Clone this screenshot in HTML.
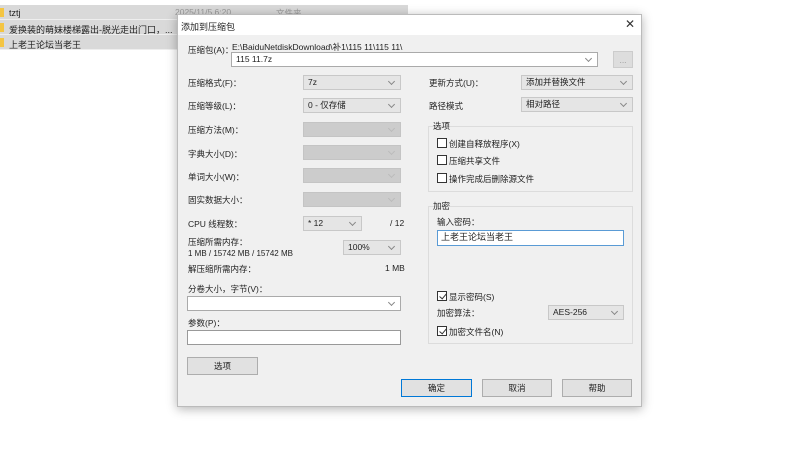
<!DOCTYPE html>
<html><head><meta charset="utf-8"><style>
*{box-sizing:border-box;margin:0;padding:0}
body{width:800px;height:451px;background:#fff;position:relative;overflow:hidden;font-family:"Liberation Sans","Noto Sans CJK SC",sans-serif;font-size:8.5px;color:#222}
.a{position:absolute;white-space:nowrap}
.row{position:absolute;left:0;width:408px;height:15px;background:#d9d9d9;border-bottom:1px solid #eee}
.fold{position:absolute;left:0;width:4px;height:9px;background:#f4c542}
#dlg{position:absolute;left:177px;top:14px;width:465px;height:393px;background:#f0f0f0;border:1px solid #bbb;box-shadow:0 2px 10px rgba(0,0,0,.3)}
#tb{position:absolute;left:0;top:0;width:100%;height:20px;background:#fff}
.sel{position:absolute;height:15px;background:#e5e5e5;border:1px solid #c8c8c8;padding-left:4px;line-height:13px}
.sel:after{content:"";position:absolute;right:6px;top:3px;width:4px;height:4px;border-right:1px solid #888;border-bottom:1px solid #888;transform:rotate(45deg)}
.dis{background:#cccccc;border-color:#c4c4c4}
.dis:after{border-color:#bbb}
.inp{position:absolute;height:15px;background:#fff;border:1px solid #7a7a7a;padding-left:3px;line-height:13px}
.btn{position:absolute;height:18px;background:#e1e1e1;border:1px solid #adadad;text-align:center;line-height:16px}
.grp{position:absolute;border:1px solid #dcdcdc}
.cb{position:absolute;width:10px;height:10px;border:1px solid #333;background:#fff}
.cb.on:after{content:"";position:absolute;left:3px;top:0px;width:3px;height:6px;border-right:1px solid #333;border-bottom:1px solid #333;transform:rotate(40deg)}
</style></head><body>
<div class="row" style="top:5px"></div><div class="fold" style="top:8px"></div>
<div class="row" style="top:20px"></div><div class="fold" style="top:23px"></div>
<div class="row" style="top:35px"></div><div class="fold" style="top:38px"></div>
<div class="a" style="left:9px;top:8px;font-size:9px">tztj</div>
<div class="a" style="left:175px;top:7px;color:#999">2025/11/5 6:20</div>
<div class="a" style="left:276px;top:7px;color:#999">文件夹</div>
<div class="a" style="left:9px;top:23px;font-size:9px">爱换装的萌妹楼梯露出-脱光走出门口，...</div>
<div class="a" style="left:9px;top:38px;font-size:9px">上老王论坛当老王</div>

<div id="dlg">
<div id="tb"></div>
<div class="a" style="left:3px;top:5px;font-size:9px">添加到压缩包</div>
<div class="a" style="left:447px;top:2px;font-size:12px;color:#333">✕</div>

<div class="a" style="left:10px;top:29px">压缩包(A)：</div>
<div class="a" style="left:54px;top:26px">E:\BaiduNetdiskDownload\补1\115 11\115 11\</div>
<div class="sel" style="left:53px;top:37px;width:367px;background:#fff;border-color:#aaa">115 11.7z</div>
<div class="btn" style="left:435px;top:36px;width:20px;height:17px;background:#ddd;border-color:#ccc;color:#999">...</div>

<div class="a" style="left:10px;top:62px">压缩格式(F)：</div><div class="sel" style="left:125px;top:60px;width:98px">7z</div>
<div class="a" style="left:10px;top:85px">压缩等级(L)：</div><div class="sel" style="left:125px;top:83px;width:98px">0 - 仅存储</div>
<div class="a" style="left:10px;top:109px">压缩方法(M)：</div><div class="sel dis" style="left:125px;top:107px;width:98px"></div>
<div class="a" style="left:10px;top:133px">字典大小(D)：</div><div class="sel dis" style="left:125px;top:130px;width:98px"></div>
<div class="a" style="left:10px;top:156px">单词大小(W)：</div><div class="sel dis" style="left:125px;top:153px;width:98px"></div>
<div class="a" style="left:10px;top:179px">固实数据大小：</div><div class="sel dis" style="left:125px;top:177px;width:98px"></div>
<div class="a" style="left:10px;top:203px">CPU 线程数：</div><div class="sel" style="left:125px;top:201px;width:59px">* 12</div>
<div class="a" style="left:212px;top:203px">/ 12</div>
<div class="a" style="left:10px;top:221px">压缩所需内存：</div>
<div class="a" style="left:10px;top:234px;font-size:8px">1 MB / 15742 MB / 15742 MB</div>
<div class="sel" style="left:165px;top:225px;width:58px">100%</div>
<div class="a" style="left:10px;top:248px">解压缩所需内存：</div>
<div class="a" style="left:207px;top:248px">1 MB</div>
<div class="a" style="left:10px;top:268px">分卷大小，字节(V)：</div>
<div class="sel" style="left:9px;top:281px;width:214px;background:#fff;border-color:#aaa"></div>
<div class="a" style="left:10px;top:302px">参数(P)：</div>
<div class="inp" style="left:9px;top:315px;width:214px;border-color:#999"></div>
<div class="btn" style="left:9px;top:342px;width:71px">选项</div>

<div class="a" style="left:251px;top:62px">更新方式(U)：</div><div class="sel" style="left:343px;top:60px;width:112px">添加并替换文件</div>
<div class="a" style="left:251px;top:85px">路径模式</div><div class="sel" style="left:343px;top:82px;width:112px">相对路径</div>

<div class="grp" style="left:250px;top:111px;width:205px;height:66px"></div>
<div class="a" style="left:255px;top:105px">选项</div>
<div class="cb" style="left:259px;top:123px"></div><div class="a" style="left:271px;top:123px">创建自释放程序(X)</div>
<div class="cb" style="left:259px;top:140px"></div><div class="a" style="left:271px;top:140px">压缩共享文件</div>
<div class="cb" style="left:259px;top:158px"></div><div class="a" style="left:271px;top:158px">操作完成后删除源文件</div>

<div class="grp" style="left:250px;top:191px;width:205px;height:138px"></div>
<div class="a" style="left:255px;top:185px">加密</div>
<div class="a" style="left:259px;top:201px">输入密码：</div>
<div class="inp" style="left:259px;top:215px;width:187px;height:16px;border-color:#5a9bd5;font-size:9px">上老王论坛当老王</div>
<div class="cb on" style="left:259px;top:276px"></div><div class="a" style="left:271px;top:276px">显示密码(S)</div>
<div class="a" style="left:259px;top:292px">加密算法：</div><div class="sel" style="left:370px;top:290px;width:76px">AES-256</div>
<div class="cb on" style="left:259px;top:311px"></div><div class="a" style="left:271px;top:311px">加密文件名(N)</div>

<div class="btn" style="left:223px;top:364px;width:71px;border:1px solid #0078d7">确定</div>
<div class="btn" style="left:304px;top:364px;width:70px">取消</div>
<div class="btn" style="left:384px;top:364px;width:70px">帮助</div>
</div>
</body></html>
